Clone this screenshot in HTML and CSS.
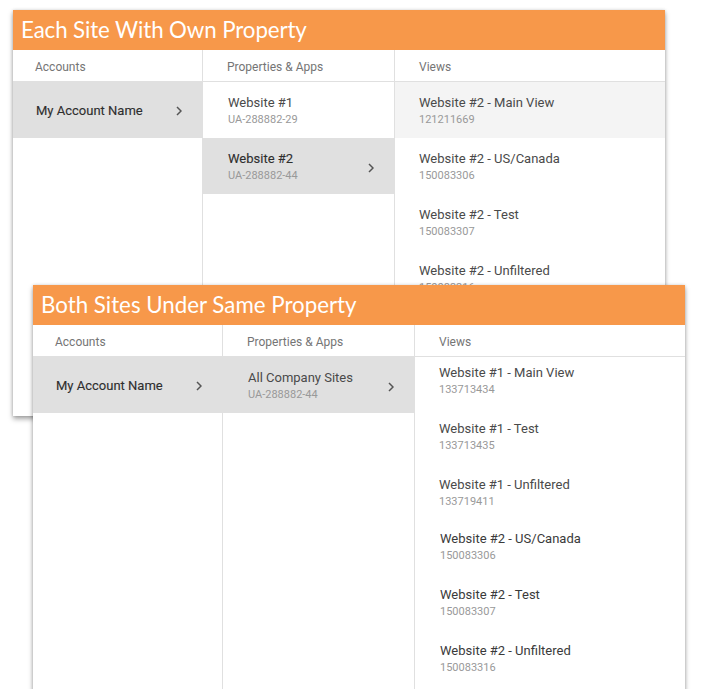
FILE: index.html
```html
<!DOCTYPE html>
<html>
<head>
<meta charset="utf-8">
<link rel="stylesheet" href="styles.css">
</head>
<body>
<div class="canvas">
  <section class="panel panel-one">
    <h1 class="title">Each Site With Own Property</h1>
    <div class="cols">
      <div class="col col-acc">
        <div class="col-head">Accounts</div>
        <div class="row row-sel single">
          <span class="name strong">My Account Name</span>
          <svg class="chev" width="6" height="10" viewBox="0 0 6 10"><path d="M1 1 L5 5 L1 9" fill="none" stroke="#555" stroke-width="1.5"/></svg>
        </div>
      </div>
      <div class="col col-prop">
        <div class="col-head">Properties &amp; Apps</div>
        <div class="row"><div><div class="name">Website #1</div><div class="sub">UA-288882-29</div></div></div>
        <div class="row row-sel">
          <div><div class="name strong">Website #2</div><div class="sub">UA-288882-44</div></div>
          <svg class="chev" width="6" height="10" viewBox="0 0 6 10"><path d="M1 1 L5 5 L1 9" fill="none" stroke="#555" stroke-width="1.5"/></svg>
        </div>
      </div>
      <div class="col col-view">
        <div class="col-head">Views</div>
        <div class="row row-light"><div><div class="name">Website #2 - Main View</div><div class="sub">121211669</div></div></div>
        <div class="row"><div><div class="name">Website #2 - US/Canada</div><div class="sub">150083306</div></div></div>
        <div class="row"><div><div class="name">Website #2 - Test</div><div class="sub">150083307</div></div></div>
        <div class="row"><div><div class="name">Website #2 - Unfiltered</div><div class="sub">150083316</div></div></div>
      </div>
    </div>
  </section>

  <section class="panel panel-two">
    <h1 class="title">Both Sites Under Same Property</h1>
    <div class="cols">
      <div class="col col-acc">
        <div class="col-head">Accounts</div>
        <div class="row row-sel single">
          <span class="name strong">My Account Name</span>
          <svg class="chev" width="6" height="10" viewBox="0 0 6 10"><path d="M1 1 L5 5 L1 9" fill="none" stroke="#555" stroke-width="1.5"/></svg>
        </div>
      </div>
      <div class="col col-prop">
        <div class="col-head">Properties &amp; Apps</div>
        <div class="row row-sel">
          <div><div class="name">All Company Sites</div><div class="sub">UA-288882-44</div></div>
          <svg class="chev" width="6" height="10" viewBox="0 0 6 10"><path d="M1 1 L5 5 L1 9" fill="none" stroke="#555" stroke-width="1.5"/></svg>
        </div>
      </div>
      <div class="col col-view">
        <div class="col-head">Views</div>
        <div class="row"><div><div class="name">Website #1 - Main View</div><div class="sub">133713434</div></div></div>
        <div class="row"><div><div class="name">Website #1 - Test</div><div class="sub">133713435</div></div></div>
        <div class="row short"><div><div class="name">Website #1 - Unfiltered</div><div class="sub">133719411</div></div></div>
        <div class="row shifted"><div><div class="name dark">Website #2 - US/Canada</div><div class="sub">150083306</div></div></div>
        <div class="row shifted"><div><div class="name dark">Website #2 - Test</div><div class="sub">150083307</div></div></div>
        <div class="row shifted"><div><div class="name dark">Website #2 - Unfiltered</div><div class="sub">150083316</div></div></div>
      </div>
    </div>
  </section>
</div>
</body>
</html>
```

FILE: styles.css
```css
html, body {
  margin: 0;
  padding: 0;
  background: #ffffff;
  overflow: hidden;
}
body {
  font-family: Roboto, "Liberation Sans", sans-serif;
  width: 702px;
  height: 689px;
}
.canvas {
  position: relative;
  width: 702px;
  height: 689px;
  box-sizing: border-box;
  padding: 10px 0 0 13px;
}
.panel {
  width: 652px;
  background: #fff;
  box-shadow: 0 3px 5px rgba(0,0,0,0.35), 0 0 3px rgba(0,0,0,0.15);
  display: flex;
  flex-direction: column;
}
.panel-one {
  height: 406px;
}
.panel-two {
  position: absolute;
  left: 33px;
  top: 285px;
  height: 420px;
}
.title {
  margin: 0;
  height: 40px;
  background: #f7984a;
  color: #fff;
  font-family: Lato, Roboto, sans-serif;
  font-weight: 400;
  font-size: 22.3px;
  line-height: 40px;
  padding-left: 8px;
  letter-spacing: -0.1px;
  white-space: nowrap;
}
.panel-two .title { letter-spacing: 0; }
.cols {
  flex: 1;
  display: grid;
  grid-template-columns: 190px 192px 1fr;
}
.col {
  display: flex;
  flex-direction: column;
}
.col-acc, .col-prop {
  border-right: 1px solid #e0e0e0;
}
.col-head {
  height: 32px;
  box-sizing: border-box;
  border-bottom: 1px solid #e0e0e0;
  font-size: 12px;
  color: #757575;
  line-height: 35px;
  padding-left: 22px;
}
.col-prop .col-head { padding-left: 24px; }
.col-view .col-head { padding-left: 24px; }
.row {
  height: 56px;
  box-sizing: border-box;
  padding: 13px 20px 0 25px;
  display: flex;
  align-items: flex-start;
  justify-content: space-between;
  flex-shrink: 0;
}
.col-acc .row { padding-left: 23px; }
.col-view .row { padding-left: 24px; }
.panel-two .col-view .row { padding-top: 8px; }
.panel-two .col-view .row.short { height: 54px; }
.panel-two .col-view .row.shifted { padding-left: 25px; }
.row.single {
  align-items: center;
  padding-top: 1px;
}
.row-sel { background: #e0e0e0; }
.row-light { background: #f4f4f4; }
.row-sel .chev { align-self: center; margin-top: -10px; }
.row.single .chev { margin-top: 0; }
.name {
  font-size: 13px;
  line-height: 16px;
  color: #4a4a4a;
}
.name.dark { color: #3a3a3a; }
.name.strong {
  color: #2e2e2e;
  -webkit-text-stroke: 0.12px #2e2e2e;
}
.sub {
  font-size: 11px;
  line-height: 17px;
  color: #999;
}
.chev { display: block; }
```
